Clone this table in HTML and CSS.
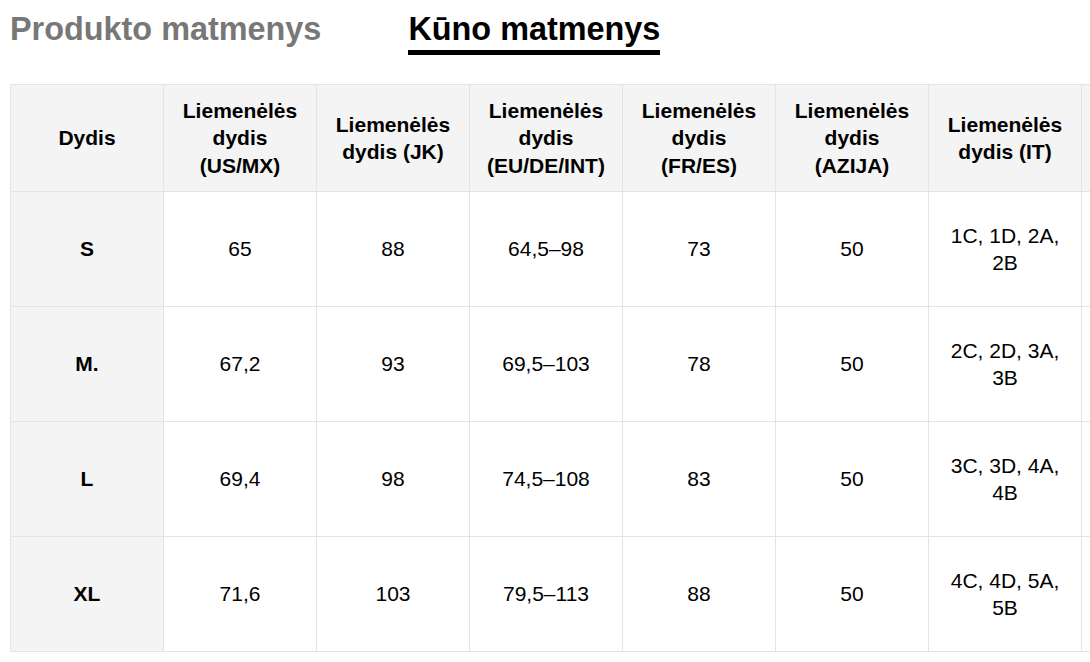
FILE: index.html
```html
<!DOCTYPE html>
<html lang="lt">
<head>
<meta charset="utf-8">
<title>Dydžių lentelė</title>
<link rel="stylesheet" href="styles.css">
</head>
<body>
<div class="page">
  <div class="tabs">
    <div class="tab">Produkto matmenys</div>
    <div class="tab active">Kūno matmenys</div>
  </div>
  <div class="table-wrap">
    <table class="sizes">
      <thead>
        <tr>
          <th class="first">Dydis</th>
          <th>Liemenėlės dydis (US/MX)</th>
          <th>Liemenėlės dydis (JK)</th>
          <th>Liemenėlės dydis (EU/DE/INT)</th>
          <th>Liemenėlės dydis (FR/ES)</th>
          <th>Liemenėlės dydis (AZIJA)</th>
          <th>Liemenėlės dydis (IT)</th>
          <th class="more"></th>
        </tr>
      </thead>
      <tbody>
        <tr>
          <th class="first">S</th>
          <td>65</td><td>88</td><td>64,5–98</td><td>73</td><td>50</td><td>1C, 1D, 2A, 2B</td><td class="more"></td>
        </tr>
        <tr>
          <th class="first">M.</th>
          <td>67,2</td><td>93</td><td>69,5–103</td><td>78</td><td>50</td><td>2C, 2D, 3A, 3B</td><td class="more"></td>
        </tr>
        <tr>
          <th class="first">L</th>
          <td>69,4</td><td>98</td><td>74,5–108</td><td>83</td><td>50</td><td>3C, 3D, 4A, 4B</td><td class="more"></td>
        </tr>
        <tr>
          <th class="first">XL</th>
          <td>71,6</td><td>103</td><td>79,5–113</td><td>88</td><td>50</td><td>4C, 4D, 5A, 5B</td><td class="more"></td>
        </tr>
      </tbody>
    </table>
  </div>
</div>
</body>
</html>
```

FILE: styles.css
```css
html, body {
  margin: 0;
  padding: 0;
  background: #ffffff;
}

body {
  font-family: "Liberation Sans", Arial, Helvetica, sans-serif;
  color: #000000;
  overflow: hidden;
}

.page {
  padding: 0 0 0 10px;
}

.tabs {
  display: flex;
  gap: 87px;
  padding-top: 11px;
  height: 84px;
  box-sizing: border-box;
}

.tab {
  font-size: 32.4px;
  font-weight: bold;
  line-height: 36px;
  color: #777777;
  height: 36px;
}

.tab.active {
  color: #000000;
  border-bottom: 5px solid #000000;
  padding-bottom: 3px;
}

.table-wrap {
  overflow: hidden;
}

.sizes {
  border-collapse: collapse;
  table-layout: fixed;
  width: 1224px;
  font-size: 21px;
  line-height: 27.5px;
}

.sizes th,
.sizes td {
  width: 153px;
  border: 1px solid #e4e4e4;
  text-align: center;
  vertical-align: middle;
  padding: 0 12px;
  box-sizing: border-box;
}

.sizes thead th {
  background: #f4f4f4;
  font-weight: bold;
  height: 107px;
}

.sizes tbody td,
.sizes tbody th {
  height: 115px;
  font-weight: normal;
}

.sizes tbody th.first {
  background: #f4f4f4;
  font-weight: bold;
}
```
